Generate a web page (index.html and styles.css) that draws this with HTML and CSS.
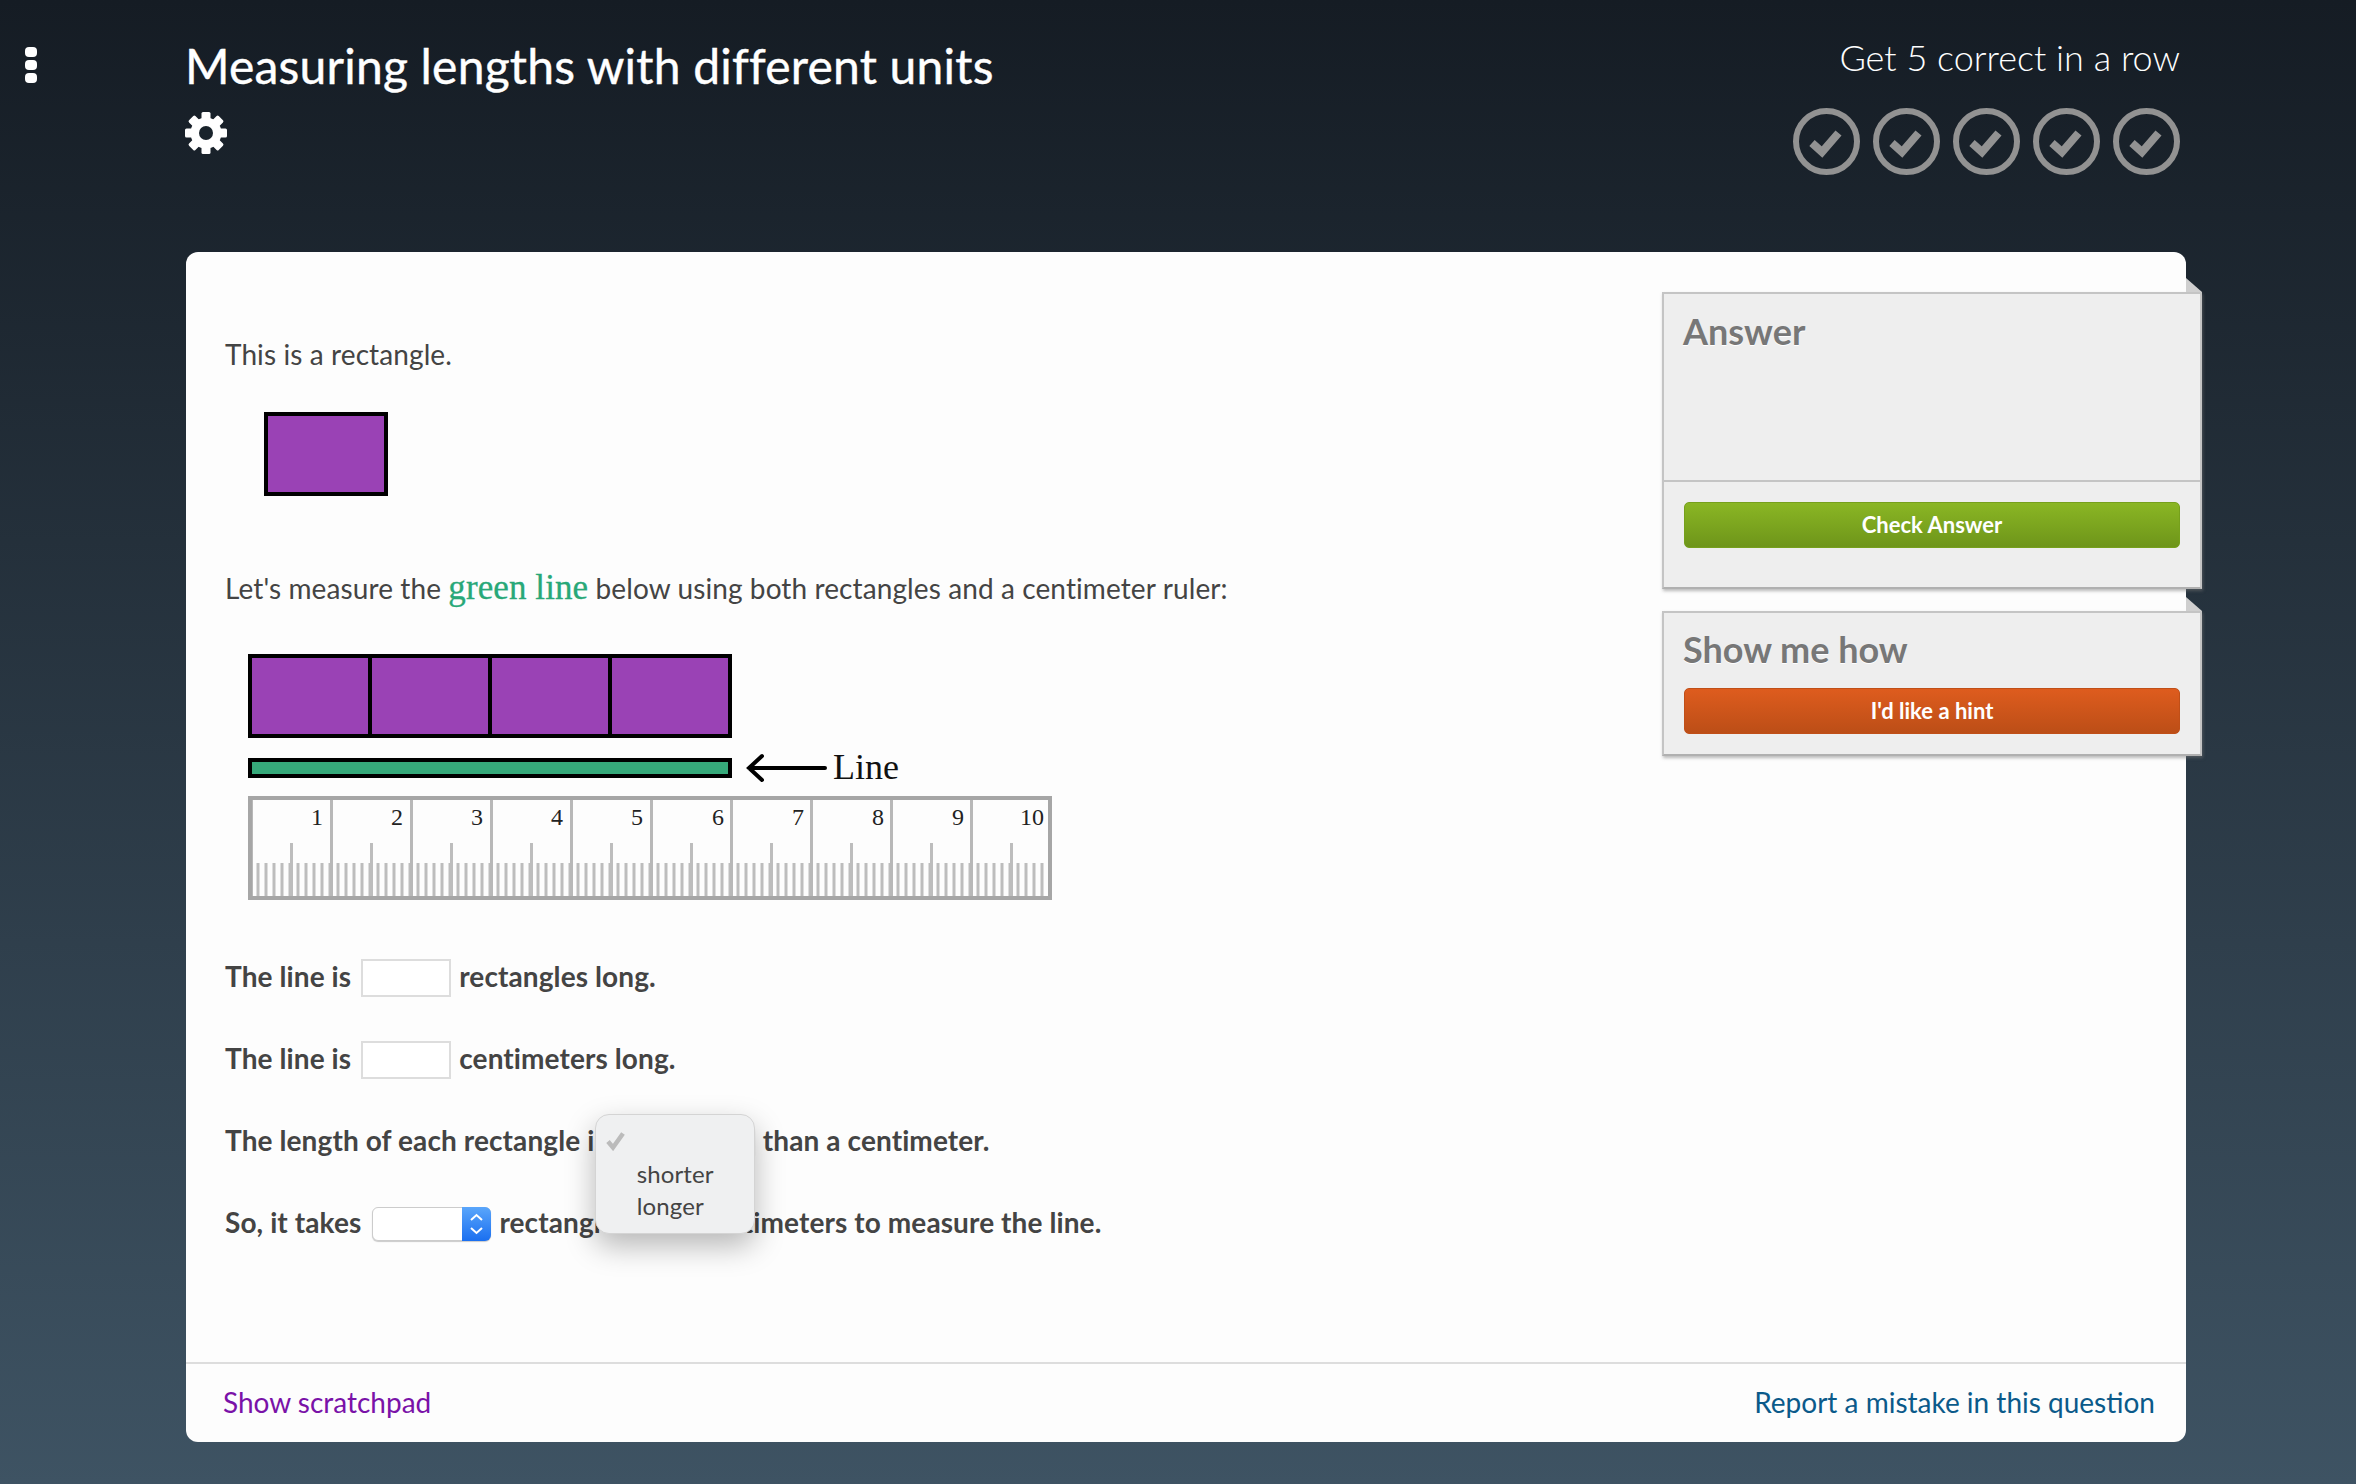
FILE: index.html
```html
<!DOCTYPE html>
<html lang="en">
<head>
    <meta charset="UTF-8">
    <meta name="viewport" content="width=device-width, initial-scale=1.0">
    <title>Measuring lengths with different units</title>
    <link rel="stylesheet" href="styles.css">
</head>
<body>
    <header class="top">
        <div class="kebab"><span></span><span></span><span></span></div>
        <div class="heading">
            <h1>Measuring lengths with different units</h1>
            <svg class="gear" viewBox="0 0 42 42">
                <g fill="#fff">
                    <rect x="16.5" y="0" width="9" height="42" rx="1.5"/>
                    <rect x="16.5" y="0" width="9" height="42" rx="1.5" transform="rotate(45 21 21)"/>
                    <rect x="16.5" y="0" width="9" height="42" rx="1.5" transform="rotate(90 21 21)"/>
                    <rect x="16.5" y="0" width="9" height="42" rx="1.5" transform="rotate(135 21 21)"/>
                    <circle cx="21" cy="21" r="15.5"/>
                </g>
                <circle cx="21" cy="21" r="7" fill="#19232b"/>
            </svg>
        </div>
        <div class="streak">
            <div class="streak-label">Get 5 correct in a row</div>
            <div class="streak-marks">
                <svg class="mark" viewBox="0 0 67 67"><circle cx="33.5" cy="33.5" r="30.5"/><path d="M19 35l10 9L45.500 25"/></svg>
                <svg class="mark" viewBox="0 0 67 67"><circle cx="33.5" cy="33.5" r="30.5"/><path d="M19 35l10 9L45.500 25"/></svg>
                <svg class="mark" viewBox="0 0 67 67"><circle cx="33.5" cy="33.5" r="30.5"/><path d="M19 35l10 9L45.500 25"/></svg>
                <svg class="mark" viewBox="0 0 67 67"><circle cx="33.5" cy="33.5" r="30.5"/><path d="M19 35l10 9L45.500 25"/></svg>
                <svg class="mark" viewBox="0 0 67 67"><circle cx="33.5" cy="33.5" r="30.5"/><path d="M19 35l10 9L45.500 25"/></svg>
            </div>
        </div>
    </header>

    <main class="card">
        <div class="card-body">
            <section class="question">
                <p class="line">This is a rectangle.</p>
                <svg class="unit-rect" width="124" height="84" viewBox="0 0 124 84">
                    <rect x="2" y="2" width="120" height="80" fill="#9a42b5" stroke="#000" stroke-width="4"/>
                </svg>
                <p class="line line-measure">Let's measure the <span class="green-line">green line</span> below using both rectangles and a centimeter ruler:</p>

                <svg class="diagram" width="806" height="246" viewBox="0 0 806 246">
                    <defs>
                        <pattern id="smallTicks" x="2" y="0" width="8" height="246" patternUnits="userSpaceOnUse">
                            <rect x="-1.5" y="209" width="3" height="33" fill="#bdbdbd"/>
                            <rect x="6.5" y="209" width="3" height="33" fill="#bdbdbd"/>
                        </pattern>
                        <pattern id="midTicks" x="42" y="0" width="80" height="246" patternUnits="userSpaceOnUse">
                            <rect x="0" y="189" width="3" height="53" fill="#bdbdbd"/>
                        </pattern>
                        <pattern id="cmTicks" x="2" y="0" width="80" height="246" patternUnits="userSpaceOnUse">
                            <rect x="0" y="143" width="3" height="99" fill="#b8b8b8"/>
                        </pattern>
                    </defs>

                    <g fill="#9a42b5" stroke="#000" stroke-width="4">
                        <rect x="2" y="2" width="120" height="80"/>
                        <rect x="122" y="2" width="120" height="80"/>
                        <rect x="242" y="2" width="120" height="80"/>
                        <rect x="362" y="2" width="120" height="80"/>
                    </g>
                    <rect x="2" y="106" width="480" height="16" fill="#36a97a" stroke="#000" stroke-width="4"/>

                    <path d="M501 114h76M514 102l-13 12 13 12" fill="none" stroke="#000" stroke-width="4" stroke-linecap="round"/>
                    <text class="line-label" x="585" y="125">Line</text>

                    <rect x="2" y="144" width="800" height="98" fill="#fdfdfd"/>
                    <rect x="2" y="144" width="800" height="98" fill="url(#smallTicks)"/>
                    <rect x="2" y="144" width="800" height="98" fill="url(#midTicks)"/>
                    <rect x="2" y="144" width="800" height="98" fill="url(#cmTicks)"/>
                    <rect x="2" y="144" width="800" height="100" fill="none" stroke="#a6a6a6" stroke-width="4"/>

                    <g class="ruler-nums" text-anchor="end">
                        <text x="75" y="171">1</text>
                        <text x="155" y="171">2</text>
                        <text x="235" y="171">3</text>
                        <text x="315" y="171">4</text>
                        <text x="395" y="171">5</text>
                        <text x="476" y="171">6</text>
                        <text x="556" y="171">7</text>
                        <text x="636" y="171">8</text>
                        <text x="716" y="171">9</text>
                        <text x="796" y="171">10</text>
                    </g>
                </svg>

                <div class="row row-first">
                    <span class="row-text">The line is</span>
                    <span class="box"></span>
                    <span class="row-text">rectangles long.</span>
                </div>
                <div class="row">
                    <span class="row-text">The line is</span>
                    <span class="box"></span>
                    <span class="row-text">centimeters long.</span>
                </div>
                <div class="row">
                    <span class="row-text">The length of each rectangle is</span>
                    <span class="select select-wide">
                        <span class="menu">
                            <svg class="menu-check" viewBox="0 0 20 20"><path d="M2 11l5 6L17 3"/></svg>
                            <span class="menu-item">shorter</span>
                            <span class="menu-item">longer</span>
                        </span>
                    </span>
                    <span class="row-text">than a centimeter.</span>
                </div>
                <div class="row">
                    <span class="row-text">So, it takes</span>
                    <span class="select select-open">
                        <span class="select-arrows">
                            <svg viewBox="0 0 29 34"><path d="M9 13l5.500-5 5.500 5M9 21l5.500 5 5.500-5"/></svg>
                        </span>
                    </span>
                    <span class="row-text">rectangles than centimeters to measure the line.</span>
                </div>
            </section>

            <aside class="side">
                <div class="panel">
                    <div class="panel-top">
                        <h2>Answer</h2>
                    </div>
                    <div class="panel-action">
                        <button class="btn btn-green">Check Answer</button>
                    </div>
                </div>
                <div class="panel panel-hint">
                    <h2>Show me how</h2>
                    <button class="btn btn-orange">I'd like a hint</button>
                </div>
            </aside>
        </div>
        <footer class="card-foot">
            <a class="link-purple" href="#">Show scratchpad</a>
            <a class="link-blue" href="#">Report a mistake in this question</a>
        </footer>
    </main>
</body>
</html>
```
FILE: styles.css
```css
* {
    box-sizing: border-box;
}
body {
    margin: 0;
    height: 1484px;
    overflow: hidden;
    font-family: 'Lato', sans-serif;
    color: #444;
    background: linear-gradient(180deg, #151c24, #3e5363);
}
.top {
    display: flex;
    height: 252px;
    padding: 0 176px 0 25px;
}
.kebab {
    width: 12px;
    margin: 47px 148px 0 0;
    display: flex;
    flex-direction: column;
    gap: 3px;
}
.kebab span {
    height: 10px;
    border-radius: 4px;
    background: #fff;
}
.heading {
    flex: 1;
    padding-top: 38px;
}
h1 {
    margin: 0;
    font-size: 48px;
    line-height: 56px;
    font-weight: 400;
    letter-spacing: 0.2px;
    color: #fff;
    -webkit-text-stroke: 0.4px #fff;
}
.gear {
    display: block;
    width: 42px;
    height: 42px;
    margin-top: 18px;
}
.streak {
    padding-top: 38px;
    text-align: right;
}
.streak-label {
    font-size: 36px;
    line-height: 38px;
    font-weight: 300;
    color: #fff;
}
.streak-marks {
    display: flex;
    gap: 13px;
    margin-top: 32px;
}
.mark {
    width: 67px;
    height: 67px;
}
.mark circle {
    fill: none;
    stroke: #929292;
    stroke-width: 6;
}
.mark path {
    fill: none;
    stroke: #929292;
    stroke-width: 8;
}
.card {
    display: flex;
    flex-direction: column;
    width: 2000px;
    height: 1190px;
    margin-left: 186px;
    background: #fdfdfd;
    border-radius: 12px;
}
.card-body {
    flex: 1;
    display: flex;
    justify-content: space-between;
}
.question {
    padding: 82px 0 0 39px;
}
.line {
    margin: 0;
    font-size: 28px;
    line-height: 40px;
    letter-spacing: 0.1px;
}
.unit-rect {
    display: block;
    margin: 38px 0 0 39px;
}
.line-measure {
    margin-top: 72px;
}
.green-line {
    font-family: 'Liberation Serif', serif;
    font-size: 35px;
    color: #28a878;
    -webkit-text-stroke: 0.3px #28a878;
}
.diagram {
    display: block;
    margin: 46px 0 0 23px;
}
.line-label {
    font-family: 'Liberation Serif', serif;
    font-size: 36px;
    fill: #111;
}
.ruler-nums {
    font-family: 'Liberation Serif', serif;
    font-size: 24px;
    fill: #222;
}
.row {
    display: flex;
    align-items: center;
    gap: 8px;
    height: 40px;
    margin-top: 42px;
    font-size: 28px;
    font-weight: 700;
    letter-spacing: 0.1px;
}
.row-first {
    margin-top: 58px;
}
.row-text {
    padding-bottom: 4px;
}
.box {
    width: 90px;
    height: 38px;
    margin-left: 2px;
    border: 2px solid #ddd;
    background: #fff;
}
.select {
    position: relative;
    width: 119px;
    height: 34px;
    border: 1px solid #ccc;
    border-radius: 6px;
    background: #fff;
    box-shadow: 0 1px 1px rgba(0, 0, 0, 0.2);
}
.select-wide {
    width: 140px;
}
.select-open {
    margin-left: 3px;
}
.select-arrows {
    position: absolute;
    top: -1px;
    right: -1px;
    width: 29px;
    height: 34px;
    border-radius: 0 6px 6px 0;
    background: linear-gradient(180deg, #5aa6fb, #1a6ff0);
}
.select-arrows svg {
    display: block;
    width: 29px;
    height: 34px;
    fill: none;
    stroke: #fff;
    stroke-width: 2;
}
.menu {
    position: absolute;
    top: -12px;
    left: -21px;
    z-index: 2;
    display: flex;
    flex-direction: column;
    width: 160px;
    height: 120px;
    padding: 43px 0 0 41px;
    background: #eff0f1;
    border-radius: 14px;
    border: 1px solid #d4d4d4;
    box-shadow: 0 12px 30px rgba(0, 0, 0, 0.28);
}
.menu-check {
    position: absolute;
    top: 15px;
    left: 10px;
    width: 20px;
    height: 21px;
    fill: none;
    stroke: #bbb;
    stroke-width: 4.5;
}
.menu-item {
    font-size: 24px;
    line-height: 32px;
    font-weight: 400;
    color: #444;
}
.side {
    width: 540px;
    margin: 40px -16px 0 0;
}
.panel {
    position: relative;
    height: 297px;
    background: #eee;
    border: 2px solid #c4c4c4;
    border-bottom-color: #b0b0b0;
    box-shadow: 1px 2px 3px rgba(120, 120, 120, 0.5);
}
.panel::before {
    content: "";
    position: absolute;
    top: -16px;
    right: -2px;
    border-right: 16px solid transparent;
    border-bottom: 14px solid #cfcfcf;
}
.panel-top {
    height: 188px;
    border-bottom: 2px solid #c4c4c4;
}
.panel-action {
    padding: 20px 20px 0;
}
.panel-hint {
    height: 145px;
    margin-top: 22px;
    padding: 0 20px;
}
h2 {
    margin: 0;
    font-size: 36px;
    line-height: 44px;
    font-weight: 700;
    color: #777;
    text-shadow: 0 1px 0 #fff;
}
.panel-top h2 {
    padding: 15px 0 0 19px;
}
.panel-hint h2 {
    margin-left: -1px;
    padding-top: 14px;
}
.btn {
    display: block;
    width: 100%;
    height: 46px;
    padding: 0 0 2px;
    border-radius: 5px;
    font-family: inherit;
    font-size: 22px;
    font-weight: 700;
    color: #fff;
}
.panel-hint .btn {
    margin-top: 17px;
}
.btn-green {
    background: linear-gradient(180deg, #8ab624, #6e951a);
    border: 1px solid #76a01c;
}
.btn-orange {
    background: linear-gradient(180deg, #de5c1e, #bc4e17);
    border: 1px solid #c04f18;
}
.card-foot {
    display: flex;
    justify-content: space-between;
    align-items: center;
    height: 80px;
    padding: 0 31px 2px 37px;
    border-top: 2px solid #ddd;
    font-size: 28px;
}
a {
    text-decoration: none;
}
.link-purple {
    color: #7a12a8;
}
.link-blue {
    color: #0b5a8a;
}
```
